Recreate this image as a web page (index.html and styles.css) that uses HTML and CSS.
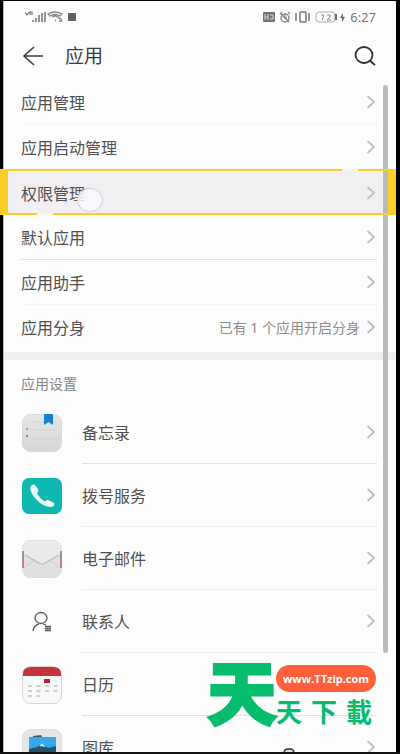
FILE: index.html
```html
<!DOCTYPE html>
<html lang="zh-CN">
<head>
<meta charset="utf-8">
<meta name="viewport" content="width=device-width, initial-scale=1">
<title>应用</title>
<link rel="stylesheet" href="styles.css">
</head>
<body>
<svg class="defs" aria-hidden="true">
  <symbol id="chevron" viewBox="0 0 10 14"><path d="M1.5 1 8 7 1.5 13" fill="none" stroke="#bdbdbd" stroke-width="1.8"/></symbol>
</svg>
<div class="phone">
<div class="screen">
  <div class="status">
    <svg width="54" height="12" viewBox="0 0 54 12" aria-hidden="true">
      <path d="M0 1l2 3 2-3M5 4V1h2v3" fill="none" stroke="#777" stroke-width="1.2"/>
      <path d="M8 11V9M11 11V7M14 11V4M17 11V2M20 11V1" stroke="#888" stroke-width="1.8"/>
      <path d="M23 3q7-4 14 0l-2 2q-5-3-10 0zM27 6q3-2 6 0l2 2M30 9l1 1M34 10h3M35 7l2 2" fill="none" stroke="#888" stroke-width="1.3"/>
      <rect x="43" y="2" width="8" height="8" rx="1" fill="#626262"/>
    </svg>
    <div class="status-right">
      <svg width="84" height="12" viewBox="0 0 84 12" aria-hidden="true">
        <rect x="0" y="1" width="12" height="10" rx="1" fill="#737373"/>
        <path d="M2 3v6M2 6h3M5 3v6M7 4h3v4H7" fill="none" stroke="#ddd"/>
        <g fill="none" stroke="#848484" stroke-width="1.3"><circle cx="22" cy="7" r="4"/><path d="M17 3l2-2M25 1l2 2M18 3l8 8M22 4v3h2"/></g>
        <g fill="none" stroke="#777" stroke-width="1.5"><rect x="37" y="1" width="6" height="10" rx="1"/><path d="M33 2v8M46 2v8"/></g>
        <rect x="53" y="1" width="19" height="10" rx="3" fill="none" stroke="#aaa"/>
        <path d="M73 3v6" stroke="#666" stroke-width="2"/>
        <path d="M58 4h3l-2 5M64 4h3v2l-3 3h4" fill="none" stroke="#888"/>
        <path d="M80 2l-3 5h2v4l3-5h-2z" fill="#666"/>
      </svg>
      <span>6:27</span>
    </div>
  </div>
  <header class="bar">
    <button type="button" aria-label="返回"><svg width="22" height="20" viewBox="0 0 22 20"><path d="M12 1 2 10l10 9M2 10h19" fill="none" stroke="#3c3c3c" stroke-width="1.6"/></svg></button>
    <h1>应用</h1>
    <button type="button" aria-label="搜索"><svg width="22" height="20" viewBox="0 0 22 20"><ellipse cx="10" cy="9" rx="8.5" ry="8" fill="none" stroke="#333" stroke-width="1.8"/><path d="M15.500 14.500 21 19" stroke="#333" stroke-width="1.8"/></svg></button>
  </header>
  <main>
    <nav class="menu">
      <a class="row" href="#"><span>应用管理</span><svg class="chev"><use href="#chevron"/></svg></a>
      <a class="row plain" href="#"><span>应用启动管理</span><svg class="chev"><use href="#chevron"/></svg></a>
      <a class="row picked" href="#"><span>权限管理</span><svg class="chev"><use href="#chevron"/></svg><i class="frame"></i><i class="touch"></i></a>
      <a class="row strong" href="#"><span>默认应用</span><svg class="chev"><use href="#chevron"/></svg></a>
      <a class="row" href="#"><span>应用助手</span><svg class="chev"><use href="#chevron"/></svg></a>
      <a class="row plain" href="#"><span>应用分身</span><small>已有 1 个应用开启分身</small><svg class="chev"><use href="#chevron"/></svg></a>
    </nav>
    <section class="apps">
      <h2>应用设置</h2>
      <a class="app" href="#">
        <svg class="icon" viewBox="0 0 40 38"><defs><linearGradient id="g" x2="0" y2="1"><stop stop-color="#e6e6e6"/><stop offset="1" stop-color="#d6d6d8"/></linearGradient></defs><rect x=".5" y=".5" width="39" height="37" rx="8" fill="url(#g)" stroke="#d9d9db"/><path d="M8 8h27M8 16h27M8 25h31" stroke="#d3d3d5"/><path d="M22 0h9v11l-4.500-3-4.500 3z" fill="#1584cf"/><circle cx="5" cy="15" r="1" fill="#888"/><circle cx="5" cy="22" r="1.200" fill="#888"/></svg>
        <div class="label strong"><span>备忘录</span><svg class="chev"><use href="#chevron"/></svg></div></a>
      <a class="app" href="#">
        <svg class="icon" viewBox="0 0 40 38"><rect y="1" width="40" height="36" rx="7" fill="#0fb9b2"/><path d="M10 8c-3 2-2 7 3 13 5 6 11 9 16 9 3 0 4-3 3-4l-6-3c-2 0-3 2-4 1-3-2-5-4-7-8 1-1 2-2 1-4l-3-4q-1-1-3 0z" fill="#eefafa"/></svg>
        <div class="label"><span>拨号服务</span><svg class="chev"><use href="#chevron"/></svg></div></a>
      <a class="app" href="#">
        <svg class="icon" viewBox="0 0 40 38"><rect x=".5" y=".5" width="39" height="37" rx="8" fill="#e0e0e0" stroke="#dcdcdc"/><path d="M1 28 15 19M39 28 25 19" stroke="#cfcfcf"/><path d="M1 14l16 9q3 2 6 0l16-9V8q0-7-8-7H9Q1 1 1 8z" fill="#ebebeb"/><path d="M3 15l14 8q3 2 6 0l14-8" fill="none" stroke="#b9b9b9" stroke-width="1.200"/><path d="M1 11v17M39 11v17" stroke="#5ba9dc" stroke-width="2" stroke-dasharray="3 3"/><path d="M1 14v14M39 14v14" stroke="#df7180" stroke-width="2" stroke-dasharray="3 3"/></svg>
        <div class="label"><span>电子邮件</span><svg class="chev"><use href="#chevron"/></svg></div></a>
      <a class="app" href="#">
        <svg class="icon" viewBox="0 0 40 38"><g fill="none" stroke="#555" stroke-width="1.300"><ellipse cx="19" cy="15" rx="6" ry="5.500"/><path d="M11 28q1-6 6-7M21 21l3 1M23 23.500h6M23 25.500h6M23 27.500h6"/></g></svg>
        <div class="label"><span>联系人</span><svg class="chev"><use href="#chevron"/></svg></div></a>
      <a class="app" href="#">
        <svg class="icon" viewBox="0 0 40 38"><rect x=".5" y=".5" width="39" height="37" rx="8" fill="#f9f9f9" stroke="#d6d4d5"/><path d="M1 10V8q0-7 8-7h22q8 0 8 7v2z" fill="#c4343f"/><rect x="22" y="13" width="6" height="4" fill="#b91f34"/><path d="M6 20h30M6 25h30M6 30h12" stroke="#cecece" stroke-width="2" stroke-dasharray="4 4.500"/><path d="M31 15h4" stroke="#ddd"/></svg>
        <div class="label strong"><span>日历</span><svg class="chev"><use href="#chevron"/></svg></div></a>
      <a class="app" href="#">
        <svg class="icon" viewBox="0 0 40 38"><rect x=".5" y=".5" width="39" height="37" rx="8" fill="#e5e4e6" stroke="#dedddf"/><path d="M11 7l8-1 1 2h-9z" fill="#465058"/><rect x="7" y="8" width="27" height="20" fill="#35a9ee"/><path d="M7 20l8-2 5-4 6 5 8-2v11H7z" fill="#23546b"/><path d="M17 17l3-3 4 4z" fill="#b9e6f7"/></svg>
        <div class="label"><span>图库</span><svg class="chev"><use href="#chevron"/></svg></div></a>
    </section>
  </main>
</div>
<div class="scrollbar"></div>
<div class="brand">
  <span class="brand-big">天</span>
  <div class="brand-side">
    <span class="brand-url">www.TTzip.com</span>
    <div class="brand-name"><span>天</span><span>下</span><span>載</span></div>
  </div>
</div>
<svg class="nub" width="16" height="4" viewBox="0 0 16 4" aria-hidden="true"><path d="M3 4q1-3 3-3h4q2 0 3 3" fill="#ddd" stroke="#333" stroke-width="1.500"/></svg>
</div>
</body>
</html>
```

FILE: styles.css
```css
* { box-sizing: border-box; }

body {
  margin: 0;
  background: #000;
  color: #505050;
  font-family: "Noto Sans", "Noto Sans CJK SC", sans-serif;
  font-size: 16px;
}

a { color: inherit; text-decoration: none; }
button { padding: 0; border: 0; background: none; display: flex; }
h1, h2 { margin: 0; font-weight: 400; }
.defs { position: absolute; width: 0; height: 0; }

.phone {
  position: relative;
  height: 100vh;
  overflow: hidden;
  padding: 1px 4px 0 3px;
  border-bottom: 2px solid #111;
}

.screen { background: #fefdfe; border-left: 1px solid #bbb; min-height: 100%; }

.status {
  display: flex;
  justify-content: space-between;
  align-items: center;
  height: 31px;
  padding: 0 20px 0 21px;
}

.status-right {
  display: flex;
  align-items: center;
  gap: 3px;
  font: 13px/16px "Noto Sans", sans-serif;
  color: #777;
}

.bar {
  display: flex;
  align-items: center;
  height: 48px;
  padding: 0 20px 0 18px;
}

.bar h1 { flex: 1; margin-left: 21px; font-size: 19px; line-height: 28px; color: #3a3a3a; }

.row {
  position: relative;
  display: flex;
  align-items: center;
  height: 45px;
  margin: 0 19px 0 17px;
  padding-right: 1px;
  border-bottom: 1px solid #f5f4f7;
}

.row span { flex: 1; }
.row small { font-size: 14px; color: #8c8c8c; margin-right: 6px; }
.row.plain { border-color: transparent; }
.row.strong, .label.strong { border-color: #e1e0e3; }
.chev { width: 10px; height: 14px; flex: none; }

.row.picked {
  margin: 0;
  padding: 0 20px 0 17px;
  border: 0;
  background: #f1eff2;
}

.frame {
  position: absolute;
  z-index: 2;
  inset: -1px 0 0 -4px;
  border: solid #fbcf27;
  border-width: 2px 8px;
}

.frame::before, .frame::after {
  content: "";
  position: absolute;
  width: 16px;
  height: 2px;
  background: #f5f4f6;
}

.frame::before { top: -2px; right: 30px; }
.frame::after { bottom: -2px; left: 29px; }

.touch {
  position: absolute;
  left: 73px;
  top: 18px;
  width: 26px;
  height: 24px;
  border: 1px solid #d6cfe4;
  border-radius: 50%;
  background: #faf9fcd9;
}

.apps { border-top: 8px solid #efeef1; margin-top: 2px; }

.apps h2 {
  padding: 12px 17px 5px;
  font-size: 14px;
  line-height: 24px;
  color: #858585;
}

.app { display: flex; align-items: center; gap: 20px; padding: 0 19px 0 18px; }
.icon { width: 40px; height: 38px; flex: none; }

.label {
  flex: 1;
  display: flex;
  align-items: center;
  justify-content: space-between;
  height: 63px;
  padding-right: 1px;
  border-bottom: 1px solid #eeedf1;
}

.scrollbar {
  position: absolute;
  top: 85px;
  right: 12px;
  bottom: 99px;
  width: 5px;
  border-radius: 3px;
  background: #aaadaccc;
}

.brand {
  position: absolute;
  right: 24px;
  bottom: 28px;
  display: flex;
  color: #05bd6c;
  font-family: "Noto Sans CJK TC", sans-serif;
  font-weight: 700;
}

.brand-big {
  font-size: 68px;
  line-height: 54px;
  -webkit-text-stroke: 4px #05bd6c;
}

.brand-side { display: flex; flex-direction: column; gap: 6px; width: 100px; padding-top: 2px; }

.brand-url {
  border-radius: 14px;
  background: #ff603b;
  color: #fff;
  font: 700 11px/27px "Open Sans", sans-serif;
  text-align: center;
}

.brand-name {
  display: flex;
  justify-content: space-between;
  padding-right: 4px;
  font-size: 26px;
  line-height: 26px;
}

.nub { position: absolute; right: 103px; bottom: 0; }
```
